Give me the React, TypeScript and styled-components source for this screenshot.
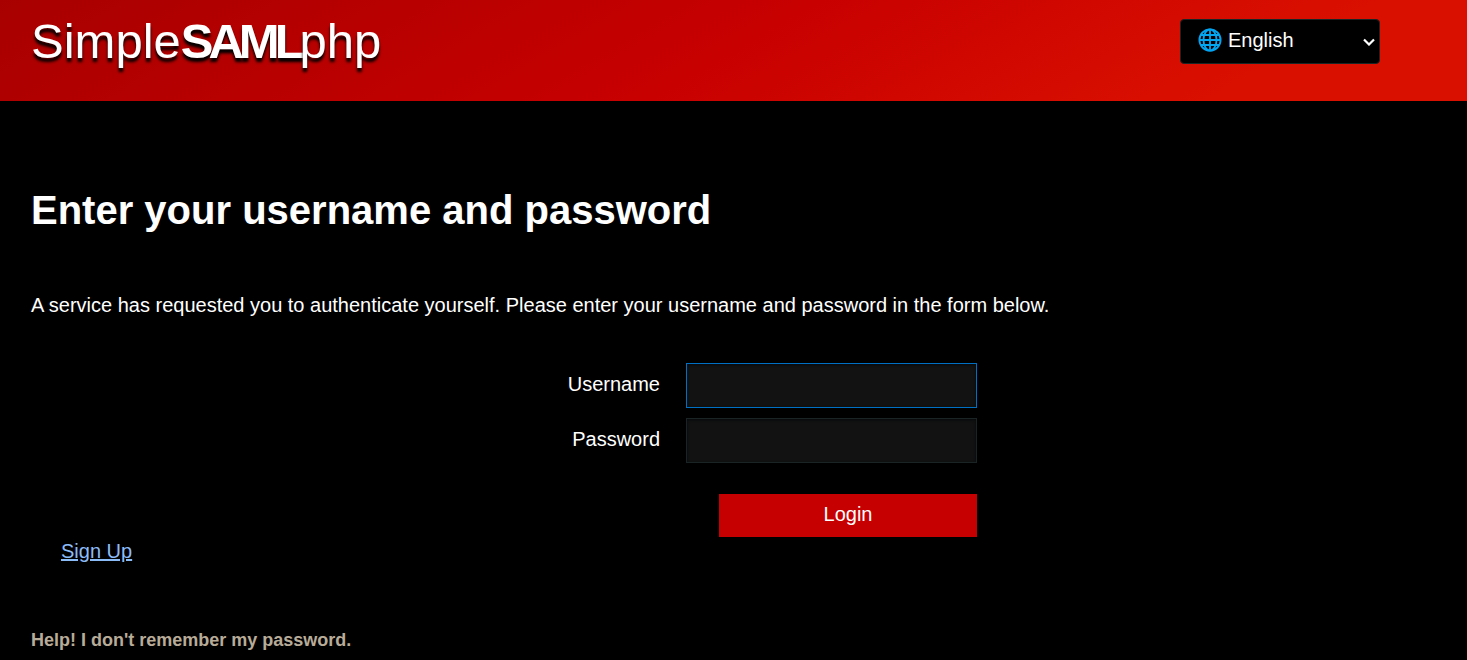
import React, { useState } from "react";
import styled, { createGlobalStyle } from "styled-components";

const GlobalStyle = createGlobalStyle`
  *, *::before, *::after { box-sizing: border-box; }
  html { background: #000; color-scheme: dark; }
  body {
    margin: 0;
    background: #000;
    color: #fff;
    font: 20px/30px "Liberation Sans", Arial, sans-serif;
  }
`;

const Header = styled.header`
  display: flex;
  justify-content: space-between;
  align-items: flex-start;
  min-height: 101px;
  padding: 11px 87px 0 31px;
  background: linear-gradient(150deg, #a80000 0%, #c80000 50%, #d91000 84%, #d91000 100%);
`;

const Logo = styled.div`
  color: #fff;
  font-size: 49px;
  line-height: 60px;
  text-shadow: 0 4px 3px #000;
`;

const LogoAccent = styled.strong`
  font-weight: 700;
  letter-spacing: -5px;
`;

const LanguageForm = styled.form`
  display: grid;
  width: 200px;
  margin-top: 8px;
`;

const LanguageSelect = styled.select`
  grid-area: 1 / 1;
  width: 100%;
  height: 45px;
  padding: 0 24px 3px 47px;
  border: 1px solid #1b2424;
  border-radius: 4px;
  appearance: none;
  background: #000;
  color: #fff;
  font: inherit;
`;

const GlobeIcon = styled.svg`
  grid-area: 1 / 1;
  z-index: 1;
  align-self: center;
  width: 24px;
  height: 24px;
  margin: 0 0 3px 18px;
  fill: none;
  stroke: #03a4f0;
  stroke-width: 1.8;
  pointer-events: none;
`;

const ChevronIcon = styled.svg`
  grid-area: 1 / 1;
  z-index: 1;
  place-self: center end;
  width: 12px;
  height: 8px;
  margin-right: 5px;
  fill: none;
  stroke: #fff;
  stroke-width: 2.2;
  pointer-events: none;
`;

const Main = styled.main`
  padding: 79px 31px 0;
`;

const Title = styled.h1`
  margin: 0;
  font-size: 40px;
  line-height: 60px;
`;

const Intro = styled.p`
  margin: 50px 0 43px;
`;

const LoginForm = styled.form`
  display: flex;
  flex-direction: column;
  align-items: flex-end;
  gap: 10px;
  width: 946px;
  max-width: 100%;
`;

const Field = styled.div`
  display: flex;
  gap: 26px;
  line-height: 42px;
`;

const TextInput = styled.input<{ $active?: boolean }>`
  width: 291px;
  height: 45px;
  padding: 0 12px;
  border: 1px solid ${({ $active }) => ($active ? "#0070c4" : "#1b2424")};
  border-radius: 0;
  outline: none;
  background: #121212;
  box-shadow: inset 0 1px 3px #05080a;
  color: #fff;
  font: inherit;
`;

const LoginButton = styled.button`
  width: 258px;
  height: 43px;
  margin-top: 21px;
  padding: 0 0 3px;
  border: 0;
  background: #c60000;
  color: #fff;
  font: inherit;
`;

const SignUpLink = styled.a`
  display: block;
  width: fit-content;
  margin-left: 30px;
  color: #8cbcf8;
  line-height: 28px;
`;

const HelpTitle = styled.h2`
  margin: 62px 0 0;
  color: #b8ab98;
  font-size: 18px;
  line-height: 27px;
`;

const Globe = () => (
  <GlobeIcon viewBox="0 0 24 24" aria-hidden="true">
    <circle cx="12" cy="12" r="10.6" />
    <ellipse cx="12" cy="12" rx="6.5" ry="10.6" />
    <path d="M12 1.5v21M1.5 12h21M2.8 7h18.4M2.8 17h18.4" />
  </GlobeIcon>
);

const Chevron = () => (
  <ChevronIcon viewBox="0 0 12 8" aria-hidden="true">
    <path d="M1 1.5l5 5 5-5" />
  </ChevronIcon>
);

export default function App() {
  const [language, setLanguage] = useState("en");
  const [username, setUsername] = useState("");
  const [password, setPassword] = useState("");

  return (
    <>
      <GlobalStyle />
      <Header>
        <Logo>
          Simple<LogoAccent>SAML</LogoAccent>php
        </Logo>
        <LanguageForm>
          <Globe />
          <LanguageSelect
            aria-label="Language"
            value={language}
            onChange={(e) => setLanguage(e.target.value)}
          >
            <option value="en">English</option>
          </LanguageSelect>
          <Chevron />
        </LanguageForm>
      </Header>
      <Main>
        <Title>Enter your username and password</Title>
        <Intro>
          A service has requested you to authenticate yourself. Please enter
          your username and password in the form below.
        </Intro>
        <LoginForm onSubmit={(e) => e.preventDefault()}>
          <Field>
            <label htmlFor="username">Username</label>
            <TextInput
              id="username"
              type="text"
              $active
              value={username}
              onChange={(e) => setUsername(e.target.value)}
            />
          </Field>
          <Field>
            <label htmlFor="password">Password</label>
            <TextInput
              id="password"
              type="password"
              value={password}
              onChange={(e) => setPassword(e.target.value)}
            />
          </Field>
          <LoginButton type="submit">Login</LoginButton>
        </LoginForm>
        <SignUpLink href="#signup">Sign Up</SignUpLink>
        <HelpTitle>Help! I don't remember my password.</HelpTitle>
      </Main>
    </>
  );
}
